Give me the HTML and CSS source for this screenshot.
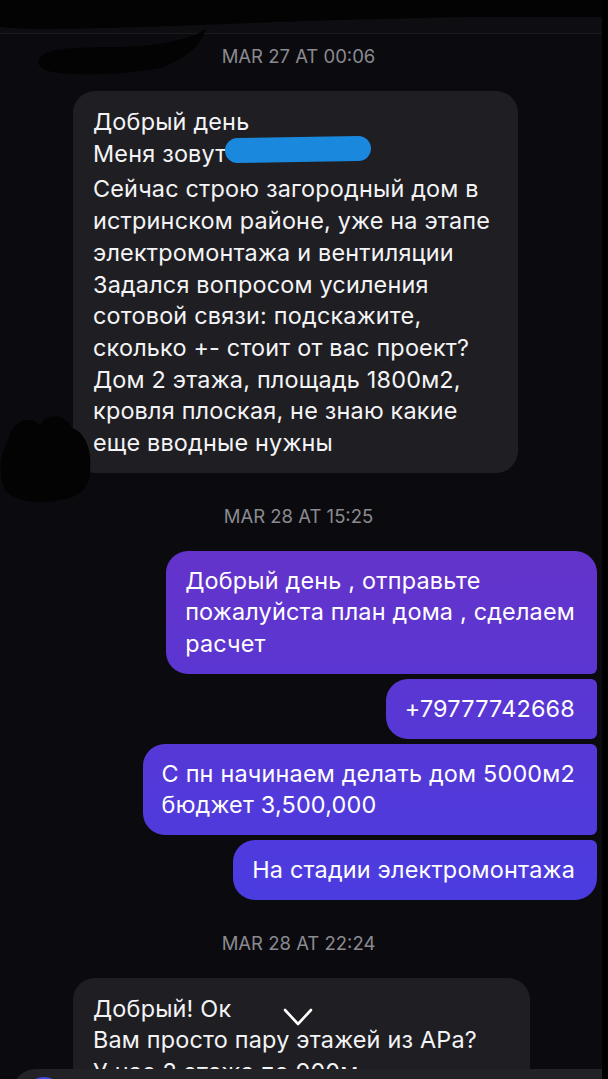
FILE: index.html
```html
<!DOCTYPE html>
<html lang="ru">
  <head>
    <meta charset="UTF-8" />
    <meta name="viewport" content="width=device-width, initial-scale=1.0" />
    <title>Chat</title>
    <link rel="stylesheet" href="styles.css">
  </head>
  <body>
    <div class="screen">
      <div class="topbar"></div>

      <div class="thread">
        <div class="stamp first">MAR 27 AT 00:06</div>

        <div class="msg incoming">
          <div class="greet">
            Добрый день<br>
            Меня зовут
            <span class="scribble"></span>
          </div>
          Сейчас строю загородный дом в<br>
          истринском районе, уже на этапе<br>
          электромонтажа и вентиляции<br>
          Задался вопросом усиления<br>
          сотовой связи: подскажите,<br>
          сколько +- стоит от вас проект?<br>
          Дом 2 этажа, площадь 1800м2,<br>
          кровля плоская, не знаю какие<br>
          еще вводные нужны
        </div>

        <div class="stamp">MAR 28 AT 15:25</div>

        <div class="outgoing-group">
          <div class="msg outgoing">
            Добрый день , отправьте<br>
            пожалуйста план дома , сделаем<br>
            расчет
          </div>
          <div class="msg outgoing">+79777742668</div>
          <div class="msg outgoing">
            С пн начинаем делать дом 5000м2<br>
            бюджет 3,500,000
          </div>
          <div class="msg outgoing">На стадии электромонтажа</div>
        </div>

        <div class="stamp">MAR 28 AT 22:24</div>

        <div class="msg incoming last">
          Добрый! Ок<br>
          Вам просто пару этажей из АРа?<br>
          У нас 2 этажа по 900м
          <svg class="chevron" width="30" height="20" viewBox="0 0 30 20">
            <path d="M2 3 L15 17 L28 3" fill="none" stroke="#fff" stroke-width="2.6" stroke-linecap="round" stroke-linejoin="round"/>
          </svg>
        </div>
      </div>

      <div class="composer"><span class="cam"></span></div>

      <!-- marker smudges over the screenshot -->
      <svg class="smudges" width="602" height="1079" viewBox="0 0 602 1079">
        <path d="M0 0 H602 V17 H470 C400 18 300 21 250 23 C200 25 150 27 60 29 C30 30 10 28 0 27 Z" fill="#030304"/>
        <path d="M40 58 C45 49 70 47 120 47 C160 46 188 40 206 29 C202 44 186 59 160 68 C120 76 60 76 45 70 C38 66 37 62 40 58 Z" fill="#030304"/>
        <path d="M8 440 C12 420 30 415 40 425 C48 412 65 414 72 428 C85 432 92 450 90 468 C92 485 80 498 60 500 C40 505 15 502 5 490 C-2 475 0 455 8 440 Z" fill="#030304"/>
      </svg>
    </div>
  </body>
</html>
```

FILE: styles.css
```css
body {
  margin: 0;
  background: #000;
  font-family: Inter, "Noto Sans", sans-serif;
}

.screen {
  position: relative;
  width: 602px;
  height: 1079px;
  background: #0b0b0f;
  overflow: hidden;
}

.topbar {
  height: 33px;
  background: #0e0e12;
  border-bottom: 1px solid #19191e;
}

.thread {
  padding-right: 5px;
}

.stamp {
  text-align: center;
  color: #8a8a90;
  font-size: 18.5px;
  line-height: 22px;
  margin: 32px 0 24px;
}

.stamp.first {
  margin-top: 11px;
}

.msg {
  box-sizing: border-box;
  font-size: 23.4px;
  line-height: 31.7px;
  letter-spacing: 0.2px;
  color: #f4f4f6;
  white-space: nowrap;
}

.incoming {
  position: relative;
  width: 445px;
  margin-left: 73px;
  padding: 15px 20px 14px;
  background: #1f1f23;
  border-radius: 22px;
}

.incoming.last {
  width: 457px;
  margin-top: 2px;
}

.greet {
  position: relative;
  margin-bottom: 4px;
}

.scribble {
  position: absolute;
  left: 132px;
  top: 31px;
  width: 146px;
  height: 25px;
  background: #1a88dc;
  border-radius: 13px;
  transform: rotate(-1deg);
}

.chevron {
  position: absolute;
  left: 210px;
  top: 29px;
}

.outgoing-group {
  display: flex;
  flex-direction: column;
  align-items: flex-end;
  gap: 5px;
}

.outgoing {
  padding: 14px 22px 14px 19px;
  border-radius: 22px 6px 6px 22px;
  color: #fff;
  background: linear-gradient(180deg, #6a30c6 40%, #6433ca 51%, #4b3ce0 83%, #4640e4 100%) fixed;
}

.outgoing:first-child {
  border-top-right-radius: 22px;
}

.outgoing:last-child {
  border-bottom-right-radius: 22px;
}

.composer {
  position: absolute;
  left: 12px;
  right: 0;
  top: 1069px;
  height: 60px;
  background: #232327;
  border-radius: 24px 0 0 0;
}

.cam {
  position: absolute;
  left: 14px;
  top: 8px;
  width: 36px;
  height: 36px;
  border-radius: 50%;
  background: #3b4de0;
}

.smudges {
  position: absolute;
  left: 0;
  top: 0;
  pointer-events: none;
}
```
